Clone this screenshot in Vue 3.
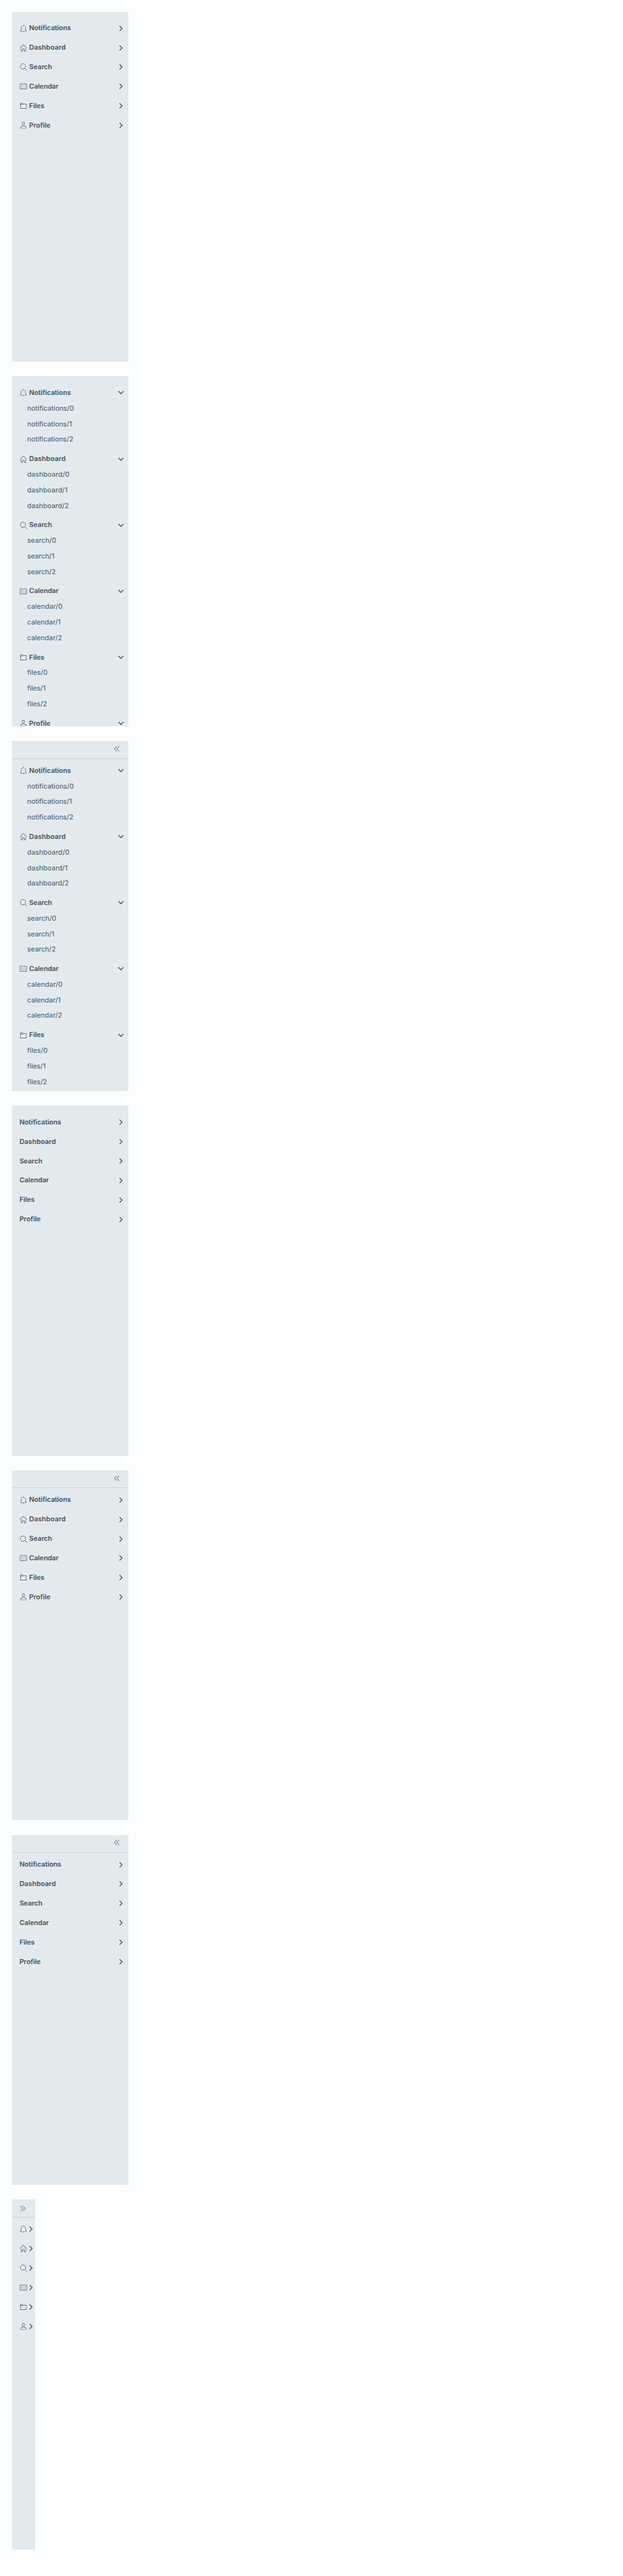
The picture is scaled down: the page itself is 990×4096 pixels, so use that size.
<script setup>
const icons = {
  bell: [
    'M32.51,27.83A14.4,14.4,0,0,1,30,24.9a12.63,12.63,0,0,1-1.35-4.81V15.15A10.81,10.81,0,0,0,19.21,4.4V3.11a1.33,1.33,0,1,0-2.67,0V4.42A10.81,10.81,0,0,0,7.21,15.15v4.94A12.63,12.63,0,0,1,5.86,24.9a14.4,14.4,0,0,1-2.47,2.93,1,1,0,0,0-.34.75v1.36a1,1,0,0,0,1,1h27.8a1,1,0,0,0,1-1V28.58A1,1,0,0,0,32.51,27.83ZM5.13,28.94a16.17,16.17,0,0,0,2.44-3,14.24,14.24,0,0,0,1.65-5.85V15.15a8.74,8.74,0,1,1,17.47,0v4.94a14.24,14.24,0,0,0,1.65,5.85,16.17,16.17,0,0,0,2.44,3Z',
    'M18,34.28A2.67,2.67,0,0,0,20.58,32H15.32A2.67,2.67,0,0,0,18,34.28Z'
  ],
  home: [
    'M33.71,17.29l-15-15a1,1,0,0,0-1.41,0l-15,15a1,1,0,0,0,1.41,1.41L18,4.41,32.29,18.71a1,1,0,0,0,1.41-1.41Z',
    'M28,32H23V22H13V32H8V18L6,20V32a2,2,0,0,0,2,2h7V24h6V34h7a2,2,0,0,0,2-2V19.76l-2-2Z'
  ],
  search: [
    'M16.33,5.05A10.95,10.95,0,1,1,5.39,16,11,11,0,0,1,16.33,5.05m0-2.05a13,13,0,1,0,13,13,13,13,0,0,0-13-13Z',
    'M35,33.29l-7.37-7.42-1.42,1.41,7.37,7.42A1,1,0,1,0,35,33.29Z'
  ],
  calendar: [
    'M32.25,6H29V8h3V30H4V8H7V6H3.75A1.78,1.78,0,0,0,2,7.81V30.19A1.78,1.78,0,0,0,3.75,32h28.5A1.78,1.78,0,0,0,34,30.19V7.81A1.78,1.78,0,0,0,32.25,6Z',
    'M8,14h2v2H8zM14,14h2v2h-2zM20,14h2v2h-2zM26,14h2v2h-2zM8,19h2v2H8zM14,19h2v2h-2zM20,19h2v2h-2zM26,19h2v2h-2zM8,24h2v2H8zM14,24h2v2h-2zM20,24h2v2h-2zM26,24h2v2h-2z',
    'M10,10a1,1,0,0,0,1-1V3A1,1,0,0,0,9,3V9A1,1,0,0,0,10,10Z',
    'M26,10a1,1,0,0,0,1-1V3a1,1,0,0,0-2,0V9A1,1,0,0,0,26,10Z',
    'M13,6h10v2H13z'
  ],
  folder: [
    'M31,9H16.42L14.11,5.82A2,2,0,0,0,12.49,5H5A2,2,0,0,0,3,7V30a2,2,0,0,0,2,2H31a2,2,0,0,0,2-2V11A2,2,0,0,0,31,9Zm0,21H5V13h8.31a2,2,0,0,0,2-2H5V7h7.49l2.61,3.59a1,1,0,0,0,.81.41H31Z'
  ],
  user: [
    'M18,17a7,7,0,1,0-7-7A7,7,0,0,0,18,17ZM18,5a5,5,0,1,1-5,5A5,5,0,0,1,18,5Z',
    'M30.47,24.37a17.16,17.16,0,0,0-24.93,0A2,2,0,0,0,5,25.74V31a2,2,0,0,0,2,2H29a2,2,0,0,0,2-2V25.74A2,2,0,0,0,30.47,24.37ZM29,31H7V25.73a15.17,15.17,0,0,1,22,0h0Z'
  ]
}

// width: advance of the bold label; childWidth: advance of the "<name>/0" link
const items = [
  { label: 'Notifications', icon: 'bell', width: 85.8, childWidth: 96 },
  { label: 'Dashboard', icon: 'home', width: 75, childWidth: 87 },
  { label: 'Search', icon: 'search', width: 47, childWidth: 59.8 },
  { label: 'Calendar', icon: 'calendar', width: 60.3, childWidth: 72.8 },
  { label: 'Files', icon: 'folder', width: 31.2, childWidth: 41.8 },
  { label: 'Profile', icon: 'user', width: 43.8, childWidth: 54 }
]

const navs = [
  { icons: true, groups: 6 },
  { icons: true, groups: 6, open: true },
  { icons: true, groups: 5, open: true, header: true },
  { groups: 6 },
  { icons: true, groups: 6, header: true },
  { groups: 6, header: true },
  { icons: true, groups: 6, header: true, collapsed: true }
]

const digitShift = [0, -4, -1.2]

const ctx = document.createElement('canvas').getContext('2d')
function tracking(text, width, weight) {
  ctx.font = `${weight} 140px Inter, "Open Sans", sans-serif`
  const natural = ctx.measureText(text).width / 10
  return { letterSpacing: ((width - natural) / text.length).toFixed(3) + 'px' }
}

// Links of a group; the last group's links lie below the panel's fold
function links(item) {
  if (item.label === 'Profile') return []
  return digitShift.map((shift, k) => {
    const text = `${item.label.toLowerCase()}/${k}`
    return { text, style: tracking(text, item.childWidth + shift, 400) }
  })
}
</script>

<template>
  <main class="page">
    <nav v-for="(nav, n) in navs" :key="n" class="nav" :class="{ collapsed: nav.collapsed, headed: nav.header }">
      <div v-if="nav.header" class="toggle">
        <svg class="double" viewBox="0 0 12 12">
          <path v-if="nav.collapsed" d="M1 .8 6 6 1 11.2M6 .8 11 6 6 11.2" />
          <path v-else d="M6 .8 1 6 6 11.2M11 .8 6 6 11 11.2" />
        </svg>
      </div>
      <section v-for="item in items.slice(0, nav.groups)" :key="item.label" class="group">
        <div class="row">
          <svg v-if="nav.icons" class="icon" viewBox="0 0 36 36">
            <path v-for="(d, i) in icons[item.icon]" :key="i" :d="d" />
          </svg>
          <span v-if="!nav.collapsed" class="label" :style="tracking(item.label, item.width, 600)">{{ item.label }}</span>
          <svg class="caret" viewBox="0 0 16 16">
            <path :d="nav.open ? 'M2.8 5.2 8 10.4 13.2 5.2' : 'M5.2 2.8 10.4 8 5.2 13.2'" />
          </svg>
        </div>
        <template v-if="nav.open">
          <div v-for="link in links(item)" :key="link.text" class="child" :style="link.style">{{ link.text }}</div>
        </template>
      </section>
    </nav>
  </main>
</template>

<style>
html, body { background: #fcfefe; overflow: hidden; }
</style>

<style scoped>
.page {
  zoom: 0.7731;
  box-sizing: border-box;
  width: 1280px;
  height: 5298px;
  padding: 24px;
  display: flex;
  flex-direction: column;
  align-items: flex-start;
  gap: 30px;
  color: #40535e;
  font-family: Inter, "Open Sans", sans-serif;
  font-size: 14px;
}
.nav {
  box-sizing: border-box;
  width: 240px;
  height: 720px;
  flex: none;
  padding-top: 18px;
  overflow: hidden;
  background: #e3eaed;
}
.nav.headed { padding-top: 0; }
.nav.collapsed { width: 48px; }
.toggle {
  box-sizing: border-box;
  height: 37px;
  margin-bottom: 8px;
  padding: 10px 17.5px 0 0;
  display: flex;
  justify-content: flex-end;
  border-bottom: 1px solid #c8d2d6;
}
.collapsed .toggle { justify-content: flex-start; padding: 13px 0 0 17.5px; }
.double { width: 12px; height: 12px; fill: none; stroke: currentColor; stroke-width: 1.2; }
.group { margin-bottom: 8px; }
.row {
  height: 32px;
  padding: 0 8px 0 16px;
  display: flex;
  align-items: center;
}
.collapsed .row { padding-right: 0; }
.icon { width: 16px; height: 16px; flex: none; fill: currentColor; }
.label { font-weight: 600; white-space: nowrap; }
.icon + .label { margin-left: 4px; }
.caret {
  width: 16px;
  height: 16px;
  flex: none;
  margin-left: auto;
  fill: none;
  stroke: currentColor;
  stroke-width: 1.7;
}
.child { height: 32px; padding-left: 32px; line-height: 34px; white-space: nowrap; }
</style>
